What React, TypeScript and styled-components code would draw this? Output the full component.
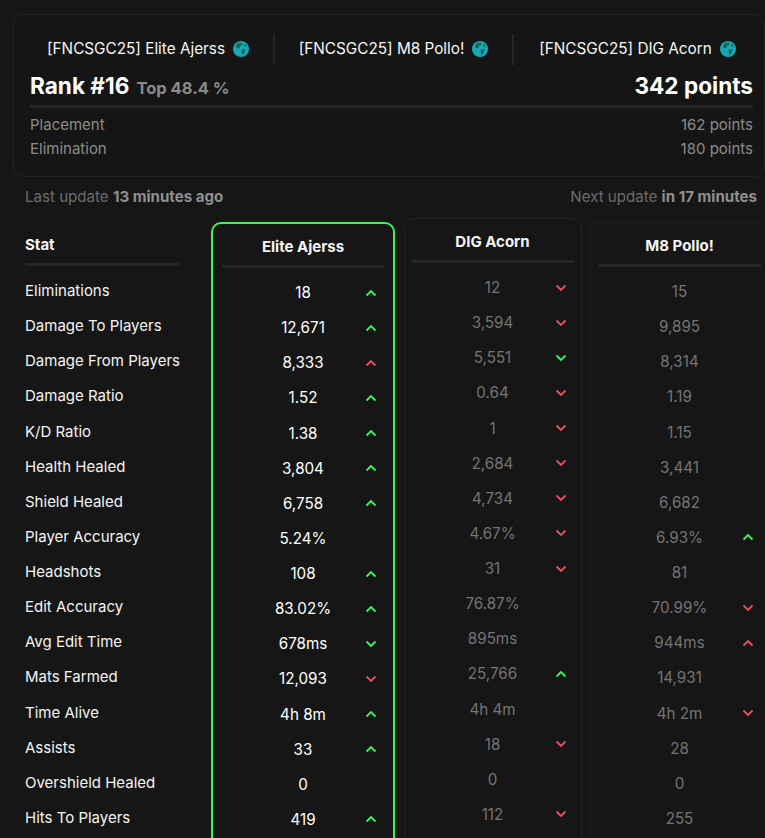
import React from "react";
import styled, { createGlobalStyle } from "styled-components";

const GlobalStyle = createGlobalStyle`
  html, body {
    margin: 0;
    height: 838px;
    overflow: hidden;
    background: #161616;
    color: #fff;
    font-family: "Inter", "Noto Sans", sans-serif;
  }
`;

const Page = styled.div`
  width: 800px;
  padding: 14px 0 0 13px;
  box-sizing: border-box;
`;

const SummaryCard = styled.section`
  width: 752px;
  height: 163px;
  box-sizing: border-box;
  padding: 19px 11px 0 16px;
  border: 1px solid #232323;
  border-radius: 10px;
  background: #151515;
`;

const Players = styled.div`
  display: grid;
  grid-template-columns: 245px 239px 1fr;
  height: 31px;
`;

const Player = styled.div<{ $divided?: boolean; $insetLeft?: number; $insetRight?: number }>`
  display: flex;
  align-items: center;
  justify-content: center;
  gap: 8px;
  padding: 0 ${(p) => p.$insetRight ?? 0}px 3px ${(p) => p.$insetLeft ?? 0}px;
  font-size: 15.3px;
  color: #f6f6f6;
  border-right: ${(p) => (p.$divided ? "2px solid #262626" : "none")};
`;

const Globe = styled.svg`
  width: 16px;
  height: 16px;
  margin-top: 2px;
`;

const RankRow = styled.div`
  display: flex;
  align-items: baseline;
  justify-content: space-between;
  margin-top: 6px;
  padding-bottom: 4px;
  border-bottom: 3px solid #262626;
`;

const RankLeft = styled.div`
  display: flex;
  align-items: baseline;
  gap: 7px;
`;

const BigText = styled.span`
  font-size: 22.6px;
  font-weight: 700;
  line-height: 30px;
`;

const TopText = styled.span`
  font-size: 16.5px;
  font-weight: 700;
  color: #8a8a8a;
`;

const PointRow = styled.div`
  display: flex;
  justify-content: space-between;
  height: 24px;
  line-height: 24px;
  font-size: 15px;
  color: #8c8c8c;
`;

const PointRows = styled.div`
  margin-top: 5px;
`;

const Updates = styled.div`
  display: flex;
  justify-content: space-between;
  width: 732px;
  margin: 10px 0 0 12px;
  font-size: 15.1px;
  line-height: 20px;
  color: #6c6c6c;
  b {
    color: #8f8f8f;
    font-weight: 700;
  }
`;

const Table = styled.div`
  display: grid;
  grid-template-columns: 177.5px 184px 178px 179px;
  column-gap: 8.5px;
  margin: 11px 0 0 12px;
`;

const Column = styled.div<{ $lift?: number; $active?: boolean }>`
  box-sizing: border-box;
  margin-top: ${(p) => 4 - (p.$lift ?? 0)}px;
  padding: 0 ${(p) => (p.$active ? 9 : 7)}px;
  height: 700px;
  border: ${(p) => (p.$active ? "2px solid #3ff25f" : "1px solid #222")};
  border-radius: 10px;
  color: ${(p) => (p.$active ? "#fff" : "#747474")};
`;

const StatColumn = styled.div`
  margin-top: 4px;
  padding-right: 22.5px;
`;

const ColumnHead = styled.div<{ $plain?: boolean }>`
  height: 41px;
  line-height: 46px;
  font-size: 15px;
  font-weight: 700;
  color: #f4f4f4;
  text-align: ${(p) => (p.$plain ? "left" : "center")};
  border-bottom: 3px solid #262626;
  margin-bottom: 7px;
`;

const StatLabel = styled.div`
  height: 35.13px;
  line-height: 35.13px;
  font-size: 15px;
  color: #f4f4f4;
  white-space: nowrap;
`;

const ValueRow = styled.div`
  display: grid;
  grid-template-columns: 1fr auto 1fr;
  align-items: center;
  height: 35.13px;
  font-size: 15.2px;
`;

const Trend = styled.svg`
  justify-self: end;
  width: 12px;
  height: 8px;
  margin-right: 7px;
`;

const stats = [
  "Eliminations", "Damage To Players", "Damage From Players", "Damage Ratio", "K/D Ratio",
  "Health Healed", "Shield Healed", "Player Accuracy", "Headshots", "Edit Accuracy",
  "Avg Edit Time", "Mats Farmed", "Time Alive", "Assists", "Overshield Healed", "Hits To Players",
];

const green = "#3ff25f";
const red = "#e8505f";

type Cell = [string, ("up" | "down")?, ("g" | "r")?];

const columns: { name: string; active?: boolean; lift?: number; cells: Cell[] }[] = [
  {
    name: "Elite Ajerss",
    active: true,
    cells: [
      ["18", "up", "g"], ["12,671", "up", "g"], ["8,333", "up", "r"], ["1.52", "up", "g"],
      ["1.38", "up", "g"], ["3,804", "up", "g"], ["6,758", "up", "g"], ["5.24%"],
      ["108", "up", "g"], ["83.02%", "up", "g"], ["678ms", "down", "g"], ["12,093", "down", "r"],
      ["4h 8m", "up", "g"], ["33", "up", "g"], ["0"], ["419", "up", "g"],
    ],
  },
  {
    name: "DIG Acorn",
    lift: 4,
    cells: [
      ["12", "down", "r"], ["3,594", "down", "r"], ["5,551", "down", "g"], ["0.64", "down", "r"],
      ["1", "down", "r"], ["2,684", "down", "r"], ["4,734", "down", "r"], ["4.67%", "down", "r"],
      ["31", "down", "r"], ["76.87%"], ["895ms"], ["25,766", "up", "g"],
      ["4h 4m"], ["18", "down", "r"], ["0"], ["112", "down", "r"],
    ],
  },
  {
    name: "M8 Pollo!",
    cells: [
      ["15"], ["9,895"], ["8,314"], ["1.19"], ["1.15"], ["3,441"], ["6,682"], ["6.93%", "up", "g"],
      ["81"], ["70.99%", "down", "r"], ["944ms", "up", "r"], ["14,931"], ["4h 2m", "down", "r"],
      ["28"], ["0"], ["255"],
    ],
  },
];

const GlobeIcon = () => (
  <Globe viewBox="0 0 16 16">
    <circle cx="8" cy="8" r="8" fill="#1ba6b8" />
    <path d="M6 1.5 9.5 2 9 4 7 5 6.5 7 4.5 7.5 3 6 3.5 3.5Z" fill="#0c6b4e" />
    <path d="M9 8 12.5 8.5 11.5 12 9.5 14 8.5 11Z" fill="#0c6b4e" />
    <path d="M12 3 14 5 12.5 6 11 4.5Z" fill="#0c6b4e" />
  </Globe>
);

const TrendIcon = ({ dir, tone }: { dir: "up" | "down"; tone: "g" | "r" }) => (
  <Trend viewBox="0 0 12 8">
    <path
      d={dir === "up" ? "M1.5 6.5 6 2l4.5 4.5" : "M1.5 1.5 6 6l4.5-4.5"}
      fill="none"
      stroke={tone === "g" ? green : red}
      strokeWidth="1.8"
    />
  </Trend>
);

export default function App() {
  return (
    <>
      <GlobalStyle />
      <Page>
        <SummaryCard>
          <Players>
            <Player $divided $insetRight={7}>[FNCSGC25] Elite Ajerss <GlobeIcon /></Player>
            <Player $divided>[FNCSGC25] M8 Pollo! <GlobeIcon /></Player>
            <Player $insetLeft={8}>[FNCSGC25] DIG Acorn <GlobeIcon /></Player>
          </Players>
          <RankRow>
            <RankLeft>
              <BigText>Rank #16</BigText>
              <TopText>Top 48.4 %</TopText>
            </RankLeft>
            <BigText>342 points</BigText>
          </RankRow>
          <PointRows>
            <PointRow><span>Placement</span><span>162 points</span></PointRow>
            <PointRow><span>Elimination</span><span>180 points</span></PointRow>
          </PointRows>
        </SummaryCard>
        <Updates>
          <span>Last update <b>13 minutes ago</b></span>
          <span>Next update <b>in 17 minutes</b></span>
        </Updates>
        <Table>
          <StatColumn>
            <ColumnHead $plain>Stat</ColumnHead>
            {stats.map((s) => <StatLabel key={s}>{s}</StatLabel>)}
          </StatColumn>
          {columns.map((c) => (
            <Column key={c.name} $lift={c.lift} $active={c.active}>
              <ColumnHead>{c.name}</ColumnHead>
              {c.cells.map(([value, dir, tone], i) => (
                <ValueRow key={i}>
                  <span />
                  <span>{value}</span>
                  {dir && tone ? <TrendIcon dir={dir} tone={tone} /> : <span />}
                </ValueRow>
              ))}
            </Column>
          ))}
        </Table>
      </Page>
    </>
  );
}
